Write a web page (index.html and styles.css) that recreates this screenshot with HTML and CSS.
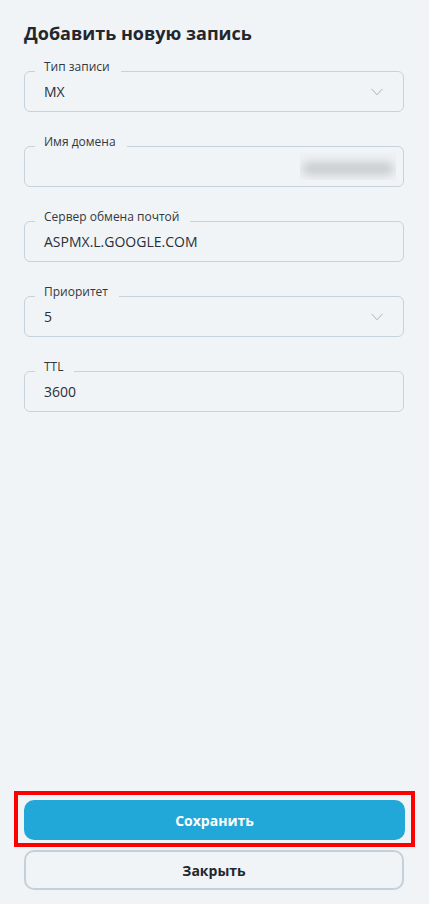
FILE: index.html
```html
<!DOCTYPE html>
<html lang="ru">
<head>
<meta charset="utf-8">
<title>Добавить новую запись</title>
<link rel="stylesheet" href="styles.css">
</head>
<body>
<div class="page">
  <main class="form">
    <h1 class="title">Добавить новую запись</h1>
    <div class="field">
      <span class="field-label">Тип записи</span>
      <span class="value">MX</span>
      <svg class="chevron" width="12" height="8" viewBox="0 0 12 8"><path d="M0.5 0.8 L6 6.8 L11.5 0.8" fill="none" stroke="#aab3bb" stroke-width="1"/></svg>
    </div>
    <div class="field">
      <span class="field-label">Имя домена</span>
      <span class="value"></span>
      <div class="blurred"><div class="blob"></div></div>
    </div>
    <div class="field">
      <span class="field-label">Сервер обмена почтой</span>
      <span class="value">ASPMX.L.GOOGLE.COM</span>
    </div>
    <div class="field">
      <span class="field-label">Приоритет</span>
      <span class="value">5</span>
      <svg class="chevron" width="12" height="8" viewBox="0 0 12 8"><path d="M0.5 0.8 L6 6.8 L11.5 0.8" fill="none" stroke="#aab3bb" stroke-width="1"/></svg>
    </div>
    <div class="field">
      <span class="field-label">TTL</span>
      <span class="value">3600</span>
    </div>
  </main>
  <footer class="actions">
    <div class="highlight">
      <button class="btn btn-primary">Сохранить</button>
    </div>
    <button class="btn btn-secondary">Закрыть</button>
  </footer>
</div>
</body>
</html>
```
FILE: styles.css
```css
html, body {
  margin: 0;
  padding: 0;
  background: #f0f4f7;
}
body {
  font-family: "Open Sans", "Noto Sans", sans-serif;
  color: #2a2f36;
}
.page {
  min-height: 904px;
  box-sizing: border-box;
  padding: 0 25px 14px 24px;
  display: flex;
  flex-direction: column;
}
.form {
  display: flex;
  flex-direction: column;
  gap: 34px;
}
.title {
  margin: 21px 0 -8px;
  font-size: 18px;
  line-height: 24px;
  font-weight: 700;
  color: #23272d;
}
.field {
  position: relative;
  height: 41px;
  box-sizing: border-box;
  border: 1px solid #c6d3dc;
  border-radius: 6px;
  display: flex;
  align-items: center;
  padding: 0 20px 0 19px;
}
.field-label {
  position: absolute;
  top: -13px;
  left: 10px;
  padding: 0 11px 0 9px;
  background: #f0f4f7;
  font-size: 12px;
  line-height: 16px;
  color: #33383e;
}
.value {
  flex: 1;
  font-size: 14px;
  line-height: 20px;
  color: #2a2f36;
}
.chevron {
  display: block;
  flex: none;
}
.blurred {
  flex: none;
  width: 96px;
  height: 27px;
  margin-right: -13px;
  overflow: hidden;
  display: flex;
  align-items: center;
  justify-content: center;
  padding-top: 4px;
  box-sizing: border-box;
  background: #eff2f5;
}
.blob {
  width: 92px;
  height: 13px;
  border-radius: 6px;
  background: #c8ccd0;
  filter: blur(5px);
}
.actions {
  margin-top: auto;
  display: flex;
  flex-direction: column;
}
.highlight {
  margin: 0 -11px 0 -10px;
  border: 4px solid #ff0000;
  padding: 5px 6px 3px 6px;
}
.btn {
  display: block;
  width: 100%;
  height: 40px;
  box-sizing: border-box;
  border-radius: 10px;
  font-family: "Open Sans", "Noto Sans", sans-serif;
  font-size: 14px;
  font-weight: 700;
  cursor: pointer;
}
.btn-primary {
  background: #22a8d8;
  border: none;
  color: #ffffff;
}
.btn-secondary {
  margin-top: 3px;
  background: #f0f4f7;
  border: 2px solid #c4d1da;
  color: #23272d;
}
```
